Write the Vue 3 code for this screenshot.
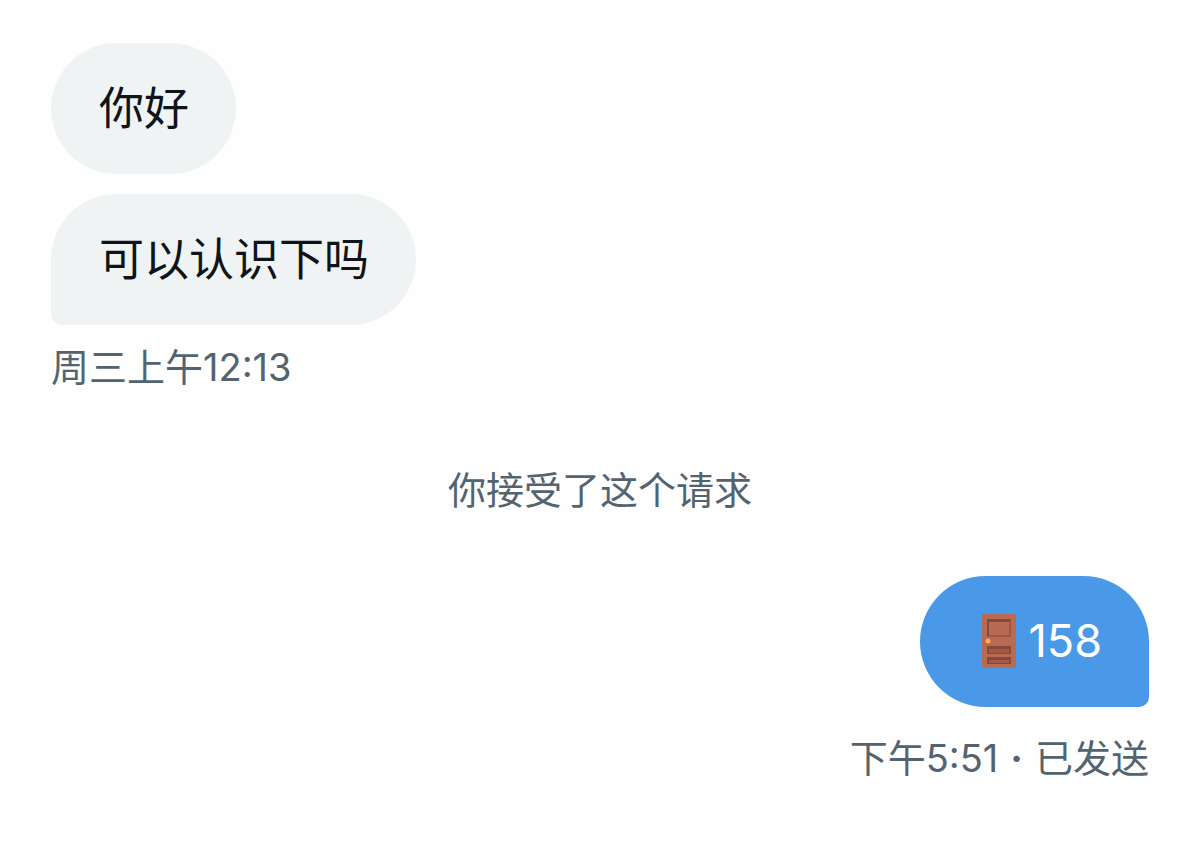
<script setup>
const incoming = ['你好', '可以认识下吗']
</script>

<template>
  <main class="chat">
    <section class="group received">
      <p
        v-for="(text, i) in incoming"
        :key="text"
        class="bubble"
        :class="{ last: i === incoming.length - 1 }"
      >{{ text }}</p>
      <time class="meta">周三上午<span class="num">12:13</span></time>
    </section>

    <p class="notice">你接受了这个请求</p>

    <section class="group sent">
      <p class="bubble last">
        <svg class="door" viewBox="0 0 34 54" role="img" aria-label="门">
          <rect width="34" height="54" rx="2" fill="#b96a52" />
          <rect x="5" y="5" width="24" height="18" fill="#85483a" />
          <path d="M7 8h20v13H7z" fill="#b96a52" />
          <path d="M5 23l2-2h20V8l2-3v18z" fill="#9c5644" />
          <rect x="5" y="32" width="24" height="8" fill="#85483a" />
          <path d="M7 35h20v4H7z" fill="#a25a47" />
          <rect x="5" y="43" width="24" height="7" fill="#85483a" />
          <path d="M7 46h20v3H7z" fill="#a25a47" />
          <circle cx="6" cy="27" r="2.5" fill="#ffac42" />
        </svg>
        <span class="num">158</span>
      </p>
      <time class="meta">下午<span class="num">5:51</span><span class="dot">·</span>已发送</time>
    </section>
  </main>
</template>

<style>
body {
  margin: 0;
  background: #fefefe;
}
</style>

<style scoped>
.chat {
  display: flex;
  flex-direction: column;
  padding: 43px 51px;
  font-family: "Liberation Sans", "Noto Sans CJK SC", sans-serif;
  color: #0f1419;
}
.group {
  display: flex;
  flex-direction: column;
  align-items: flex-start;
}
.sent {
  align-items: flex-end;
}
.bubble {
  display: flex;
  align-items: center;
  box-sizing: border-box;
  min-height: 131px;
  margin: 0 0 20px;
  padding: 34px 47px 32px 48px;
  border-radius: 66px;
  background: #eff3f4;
  font-size: 45px;
  line-height: 64px;
}
.received .last {
  margin-bottom: 18px;
  border-bottom-left-radius: 10px;
}
.sent .last {
  gap: 13px;
  margin-bottom: 27px;
  padding: 32px 47px 34px 62px;
  border-bottom-right-radius: 10px;
  background: #4a99e9;
  color: #fff;
}
.meta,
.notice {
  font-size: 38px;
  line-height: 48px;
  color: #536471;
}
.num,
.dot {
  font-family: Inter, "Liberation Sans", sans-serif;
}
.dot {
  padding: 0 12px;
  font-weight: 700;
}
.notice {
  margin: 75px 0 61px;
  text-align: center;
}
.door {
  width: 34px;
  height: 54px;
}
</style>
